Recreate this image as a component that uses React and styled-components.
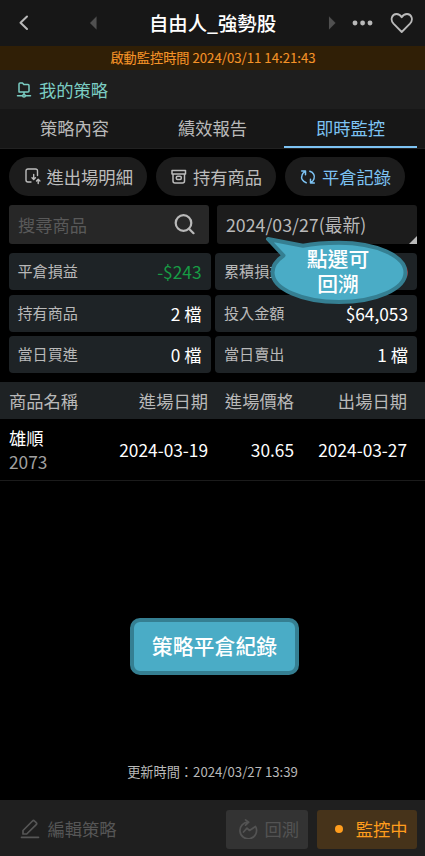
import React from 'react';
import styled, { createGlobalStyle, css } from 'styled-components';

const GlobalStyle = createGlobalStyle`
  * { box-sizing: border-box; }
  body {
    margin: 0;
    background: #000;
    font-family: "Noto Sans CJK TC", sans-serif;
    font-size: 17.3px;
    color: #b9b9b9;
  }
  button, input { font: inherit; color: inherit; border: 0; margin: 0; padding: 0; background: none; }
`;

const Screen = styled.div`
  position: relative;
  display: flex;
  flex-direction: column;
  width: 425px;
  height: 856px;
  overflow: hidden;
  background: #000;
  line-height: 24px;
  white-space: nowrap;
`;

const Icon = styled.svg`
  display: block;
  flex: none;
  fill: none;
  stroke: currentColor;
  stroke-width: ${(p) => p.$weight || 1.5};
  stroke-linecap: round;
  stroke-linejoin: round;
`;

const Header = styled.header`
  display: grid;
  grid-template-columns: 88px 1fr 89px;
  align-items: center;
  height: 46px;
  flex: none;
  background: #171717;
`;

const HeaderLeft = styled.div`
  display: flex;
  align-items: center;
  padding-left: 17px;
`;

const TitleGroup = styled.div`
  display: flex;
  align-items: center;
  justify-content: space-between;
  padding: 0 0 0 1px;
  color: #505050;
`;

const Title = styled.h1`
  margin: 0;
  font-size: 19.4px;
  font-weight: 500;
  color: #fff;
`;

const HeaderActions = styled.div`
  display: flex;
  align-items: center;
  gap: 17px;
  padding-left: 16px;
  padding-bottom: 1px;
`;

const Banner = styled.div`
  height: 24px;
  flex: none;
  padding-left: 1px;
  text-align: center;
  font-size: 13.2px;
  -webkit-text-stroke: 0.1px currentColor;
  color: #f49328;
  background: #301f06;
`;

const StrategyBar = styled.div`
  display: flex;
  align-items: center;
  gap: 7px;
  height: 39px;
  flex: none;
  padding: 0 0 0 16px;
  color: #7bcdc3;
  background: #1e1e1e;
`;

const Tabs = styled.nav`
  display: grid;
  grid-template-columns: repeat(3, 1fr);
  column-gap: 5px;
  height: 40px;
  flex: none;
  padding: 0 8px;
  background: #171717;
  border-bottom: 1px solid #212121;
`;

const Tab = styled.button`
  height: 39px;
  color: ${(p) => (p.$active ? '#7dc3f3' : '#b9b9b9')};
  border-bottom: 2px solid ${(p) => (p.$active ? '#7dc3f3' : 'transparent')};
`;

const Pills = styled.div`
  display: flex;
  gap: 8.5px;
  flex: none;
  padding: 8px 0 0 9px;
`;

const Pill = styled.button`
  display: flex;
  align-items: center;
  gap: 6px;
  width: ${(p) => p.$width}px;
  height: 39px;
  padding: 0 0 0 15.5px;
  border-radius: 20px;
  background: #1c1c1c;
  color: ${(p) => (p.$active ? '#7dc3f3' : '#bcbcbc')};
`;

const Filters = styled.div`
  display: grid;
  grid-template-columns: 200px 200px;
  column-gap: 8px;
  flex: none;
  padding: 9px 0 0 9px;
`;

const field = css`
  display: flex;
  align-items: center;
  height: 39px;
  border-radius: 3px;
`;

const SearchField = styled.label`
  ${field}
  justify-content: space-between;
  padding: 0 14px 0 9px;
  background: #272727;
`;

const SearchInput = styled.input`
  width: 120px;
  outline: none;
  &::placeholder { color: #595959; opacity: 1; }
`;

const DateSelect = styled.button`
  ${field}
  position: relative;
  padding: 0 0 1px 9px !important;
  font-size: 17.75px;
  background: #1c1c1c;
  &::after {
    content: '';
    position: absolute;
    right: 0;
    bottom: 0;
    border: 4px solid transparent;
    border-right-color: #b9b9b9;
    border-bottom-color: #b9b9b9;
  }
`;

const Stats = styled.section`
  display: grid;
  grid-template-columns: 202px 202px;
  gap: 4.5px;
  flex: none;
  padding: 9px 0 0 8.5px;
`;

const Stat = styled.div`
  display: flex;
  align-items: center;
  justify-content: space-between;
  height: 37px;
  padding: 0 9px;
  border-radius: 4px;
  background: #1e2326;
`;

const StatLabel = styled.span`
  padding-bottom: 3px;
  font-size: 15.1px;
`;

const valueColors = { down: '#179c45', up: '#e5343a', plain: '#fff' };

const StatValue = styled.span`
  padding-top: 1px;
  color: ${(p) => valueColors[p.$tone]};
`;

const columns = css`
  display: grid;
  grid-template-columns: 84px 115px 86px 113px;
  padding-left: 9px;
  align-items: center;
  & > :not(:first-child) { text-align: right; }
`;

const TableHead = styled.div`
  ${columns}
  height: 37px;
  flex: none;
  margin-top: 9px;
  background: #1e2224;
`;

const TableRow = styled.div`
  ${columns}
  height: 62px;
  flex: none;
  padding-top: 1px;
  border-bottom: 1px solid #1b1b1b;
  color: #fff;
`;

const Product = styled.div`
  display: flex;
  flex-direction: column;
`;

const Code = styled.span`
  color: #a0a0a0;
`;

const Content = styled.main`
  display: flex;
  flex: 1;
  flex-direction: column;
  align-items: center;
  justify-content: space-between;
  padding: 137px 0 16px;
`;

const NoteBox = styled.div`
  display: flex;
  align-items: center;
  justify-content: center;
  width: 169px;
  height: 57px;
  margin-left: 4px;
  padding-bottom: 3px;
  border: 4px solid #357f92;
  border-radius: 10px;
  background: #4aacc6;
  color: #fff;
  font-size: 20.9px;
  font-weight: 500;
`;

const Updated = styled.div`
  font-size: 13.2px;
`;

const Footer = styled.footer`
  display: flex;
  align-items: center;
  height: 56px;
  flex: none;
  padding: 2px 8.5px 0 20px;
  background: #1f1f1f;
`;

const EditButton = styled.button`
  display: flex;
  align-items: center;
  gap: 7.5px;
  color: #565656;
`;

const ActionButton = styled.button`
  ${field}
  justify-content: space-between;
  width: ${(p) => p.$width}px;
  margin-left: ${(p) => (p.$active ? '9px' : 'auto')};
  padding: ${(p) => (p.$active ? '0 9px 0 18px' : '0 9px 0 12px')};
  color: ${(p) => (p.$active ? '#ff9d1d' : '#535353')};
  background: ${(p) => (p.$active ? '#46331a' : '#333')};
`;

const StatusDot = styled.span`
  width: 8px;
  height: 8px;
  border-radius: 50%;
  background: currentColor;
`;

const Callout = styled.div`
  position: absolute;
  left: 263px;
  top: 234px;
  width: 147px;
  height: 72px;
  color: #fff;
`;

const CalloutShape = styled.svg`
  position: absolute;
  inset: 0;
`;

const CalloutText = styled.div`
  position: relative;
  padding: 12px 0 0 3px;
  text-align: center;
  font-size: 20.8px;
  font-weight: 500;
  line-height: 25px;
`;

const stats = [
  ['平倉損益', '-$243', 'down'],
  ['累積損益', '$0', 'up'],
  ['持有商品', '2 檔', 'plain'],
  ['投入金額', '$64,053', 'plain'],
  ['當日買進', '0 檔', 'plain'],
  ['當日賣出', '1 檔', 'plain'],
];

export default function App() {
  return (
    <>
      <GlobalStyle />
      <Screen>
        <Header>
          <HeaderLeft>
            <Icon width="14" height="18" viewBox="0 0 14 18" $weight={2}><path d="M10 2.500 3.500 8.700 10 15" /></Icon>
          </HeaderLeft>
          <TitleGroup>
            <Icon width="8" height="14" viewBox="0 0 8 14" $weight={0.1}><path d="M7.500 .5v13L1 7z" fill="currentColor" /></Icon>
            <Title>自由人_強勢股</Title>
            <Icon width="8" height="14" viewBox="0 0 8 14" $weight={0.1}><path d="M1 .5v13L7.500 7z" fill="currentColor" /></Icon>
          </TitleGroup>
          <HeaderActions>
            <Icon width="21" height="6" viewBox="0 0 21 6" $weight={0.1}>
              <g fill="currentColor"><circle cx="3" cy="3" r="2.4" /><circle cx="10.600" cy="3" r="2.4" /><circle cx="18" cy="3" r="2.4" /></g>
            </Icon>
            <Icon width="24" height="22" viewBox="0 0 24 22" $weight={1.8}>
              <path d="M11.700 20 3.500 11.700C-.2 7.700 2 2 6.500 2 9 2 10.700 3.500 11.700 5.200 12.700 3.500 14.500 2 17 2c4.600 0 6.700 5.700 3 9.700z" />
            </Icon>
          </HeaderActions>
        </Header>
        <Banner>啟動監控時間 2024/03/11 14:21:43</Banner>
        <StrategyBar>
          <Icon width="16" height="16" viewBox="0 0 16 16">
            <path d="M3 10V2q0-1 1-1H6.500l1.300 1.500H12q1 0 1 1V9q0 1-1 1zM8 10v2.500M1.500 13.800h5M9.500 13.800h5" /><circle cx="8" cy="13.700" r="1.300" />
          </Icon>
          <span>我的策略</span>
        </StrategyBar>
        <Tabs>
          <Tab>策略內容</Tab>
          <Tab>績效報告</Tab>
          <Tab $active>即時監控</Tab>
        </Tabs>
        <Pills>
          <Pill $width={138}>
            <Icon width="16" height="17" viewBox="0 0 16 17" $weight={1.4}>
              <path d="M12.500 7.500V3q0-2-2-2H3Q1 1 1 3v9q0 2 2 2h3M8.700 6.500v4.700M7 9.800l1.700 1.700 1.700-1.700M13.200 15.500v-4.200M11.500 13l1.700-1.700L14.900 13" />
            </Icon>
            <span>進出場明細</span>
          </Pill>
          <Pill $width={120.5}>
            <Icon width="16" height="16" viewBox="0 0 16 16">
              <path d="M1 1.500h13.500V5H1zM2 5v7q0 2 2 2h7.500q2 0 2-2V5" /><rect x="5.300" y="7.300" width="5" height="3.200" rx="1.200" />
            </Icon>
            <span>持有商品</span>
          </Pill>
          <Pill $width={120.5} $active>
            <Icon width="16" height="16" viewBox="0 0 16 16">
              <path d="M6.200 13.700C2.500 12.500.8 9.500 2 6.200 2.500 4.500 3.500 3.300 5 2.300M1.700 2H5.500v3.700M9.800 2.300c3.700 1.200 5.400 4.200 4.200 7.500-.5 1.700-1.500 2.900-3 3.900M14.300 14h-3.800v-3.700" />
            </Icon>
            <span>平倉記錄</span>
          </Pill>
        </Pills>
        <Filters>
          <SearchField>
            <SearchInput placeholder="搜尋商品" />
            <Icon width="21" height="21" viewBox="0 0 21 21" $weight={2.200}><circle cx="9.500" cy="9" r="7.800" /><path d="m15 14.700 4.500 4.500" /></Icon>
          </SearchField>
          <DateSelect>2024/03/27(最新)</DateSelect>
        </Filters>
        <Stats>
          {stats.map(([label, value, tone]) => (
            <Stat key={label}>
              <StatLabel>{label}</StatLabel>
              <StatValue $tone={tone}>{value}</StatValue>
            </Stat>
          ))}
        </Stats>
        <TableHead>
          <span>商品名稱</span><span>進場日期</span><span>進場價格</span><span>出場日期</span>
        </TableHead>
        <TableRow>
          <Product><span>雄順</span><Code>2073</Code></Product>
          <span>2024-03-19</span><span>30.65</span><span>2024-03-27</span>
        </TableRow>
        <Content>
          <NoteBox>策略平倉紀錄</NoteBox>
          <Updated>更新時間：2024/03/27 13:39</Updated>
        </Content>
        <Footer>
          <EditButton>
            <Icon width="20" height="20" viewBox="0 0 20 20" $weight={1.700}>
              <path d="M3 15v-3.500L12.500 2q1-1 2 0l1.700 1.700q1 1 0 2L6.700 15zM1.500 18.300h17" />
            </Icon>
            <span>編輯策略</span>
          </EditButton>
          <ActionButton $width={82.5}>
            <Icon width="20" height="20" viewBox="0 0 20 20" $weight={1.700}>
              <path d="M18 8.500A8.300 8.300 0 1 1 10.500 3.200M7.500 .9l3.200 2.300L7.500 6.200M5.500 13 9 9.200l2.500 2.300 6-4" />
            </Icon>
            <span>回測</span>
          </ActionButton>
          <ActionButton $width={99.5} $active>
            <StatusDot />
            <span>監控中</span>
          </ActionButton>
        </Footer>
        <Callout>
          <CalloutShape width="147" height="72" viewBox="0 0 147 72">
            <path d="M5 5 40 11.800C51 9.500 63 8.700 76 8.700 113 8.700 142.500 22 142.500 38.400S113 68 76 68 9.500 54.800 9.500 38.400C9.500 32 14 26 20.500 21.500Z" fill="#4aacc6" stroke="#357f92" strokeWidth="4" strokeLinejoin="round" />
          </CalloutShape>
          <CalloutText>點選可<br />回溯</CalloutText>
        </Callout>
      </Screen>
    </>
  );
}
